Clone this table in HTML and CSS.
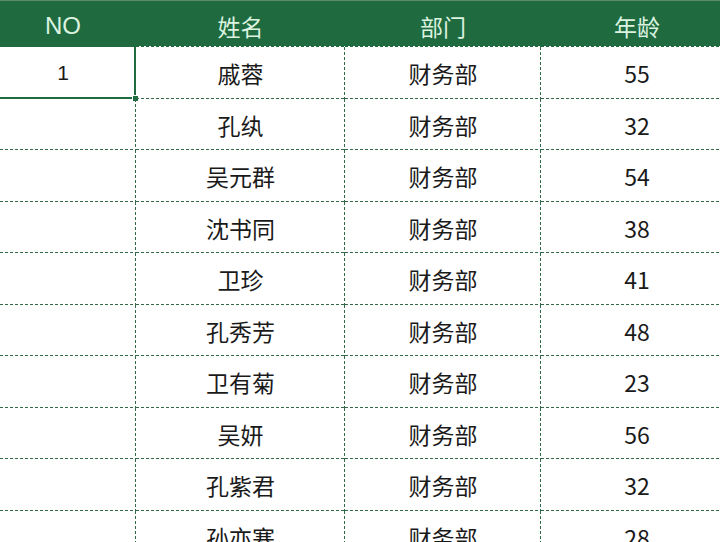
FILE: index.html
```html
<!DOCTYPE html>
<html lang="zh">
<head>
<meta charset="utf-8">
<title>员工表</title>
<link rel="stylesheet" href="styles.css">
</head>
<body>
<div class="sheet">
  <div class="row head">
    <div class="hc first">NO</div>
    <div class="hc">姓名</div>
    <div class="hc">部门</div>
    <div class="hc">年龄</div>
  </div>
  <div class="row"><div class="c sel">1</div><div class="c">戚蓉</div><div class="c">财务部</div><div class="c">55</div></div>
  <div class="row"><div class="c"></div><div class="c">孔纨</div><div class="c">财务部</div><div class="c">32</div></div>
  <div class="row"><div class="c"></div><div class="c">吴元群</div><div class="c">财务部</div><div class="c">54</div></div>
  <div class="row"><div class="c"></div><div class="c">沈书同</div><div class="c">财务部</div><div class="c">38</div></div>
  <div class="row"><div class="c"></div><div class="c">卫珍</div><div class="c">财务部</div><div class="c">41</div></div>
  <div class="row"><div class="c"></div><div class="c">孔秀芳</div><div class="c">财务部</div><div class="c">48</div></div>
  <div class="row"><div class="c"></div><div class="c">卫有菊</div><div class="c">财务部</div><div class="c">23</div></div>
  <div class="row"><div class="c"></div><div class="c">吴妍</div><div class="c">财务部</div><div class="c">56</div></div>
  <div class="row"><div class="c"></div><div class="c">孔紫君</div><div class="c">财务部</div><div class="c">32</div></div>
  <div class="row"><div class="c"></div><div class="c">孙亦寒</div><div class="c">财务部</div><div class="c">28</div></div>
</div>
</body>
</html>
```

FILE: styles.css
```css
html, body {
  margin: 0;
  padding: 0;
  background: #ffffff;
  overflow: hidden;
}
body {
  width: 720px;
  height: 542px;
  font-family: "Noto Sans CJK SC", "Noto Sans", sans-serif;
}
.sheet {
  margin-left: -10px;
  width: 743px;
}
.row {
  display: grid;
  grid-template-columns: 146px 209px 196px 192px;
  height: 51.5px;
}
.row.head {
  height: 47px;
  border-top: 1px solid #5d8c6c;
  box-sizing: border-box;
}
.hc {
  display: flex;
  align-items: center;
  justify-content: center;
  color: #dcf3e0;
  font-size: 23px;
  padding-top: 3px;
  background:
    linear-gradient(to right, transparent 3px, #ffffff 3px) repeat-x left bottom / 5px 1px,
    #1f6b3f;
}
.hc.first {
  background: #1f6b3f;
  font-family: "Liberation Sans", "Noto Sans", sans-serif;
  font-size: 24px;
}
.c {
  position: relative;
  display: flex;
  align-items: center;
  justify-content: center;
  color: #1a1a1a;
  font-size: 23px;
  padding-top: 1px;
  background:
    linear-gradient(to right, #336849 3px, transparent 3px) repeat-x left bottom / 5px 1px,
    linear-gradient(to bottom, #336849 3px, transparent 3px) repeat-y right top / 1px 5px;
}
.c.sel {
  background: none;
  box-shadow: inset -2px -2px 0 #1f6b3f;
  font-family: "Liberation Sans", "Noto Sans", sans-serif;
  font-size: 21px;
}
.c.sel::after {
  content: "";
  position: absolute;
  right: -3px;
  bottom: -3px;
  width: 5px;
  height: 5px;
  background: #1f6b3f;
  border: 1px solid #ffffff;
}
```
